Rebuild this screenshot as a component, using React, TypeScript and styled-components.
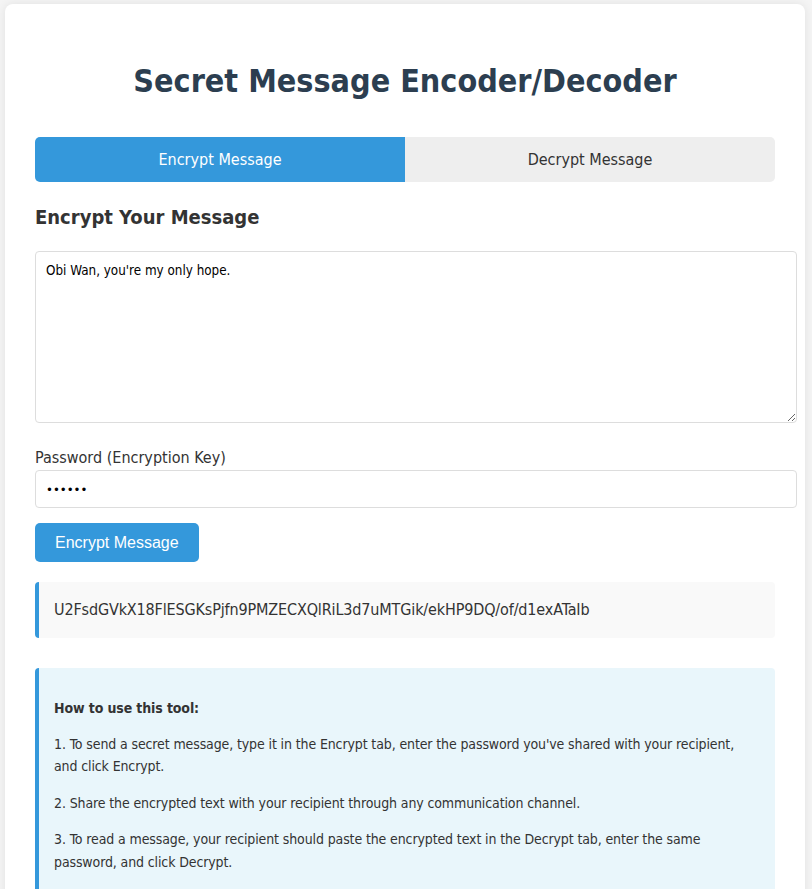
import React, { useState } from "react";
import styled, { createGlobalStyle } from "styled-components";

const FONT = `"DejaVu Sans Condensed", "DejaVu Sans", Verdana, sans-serif`;

const Global = createGlobalStyle`
  html, body { margin: 0; padding: 0; }
  body {
    background: #f4f4f4;
    font-family: ${FONT};
    color: #333;
    line-height: 1.6;
  }
`;

const Page = styled.div`
  padding: 4px 0 0 5px;
`;

const Card = styled.div`
  width: 800px;
  box-sizing: border-box;
  background: #fff;
  border-radius: 8px;
  padding: 30px;
  box-shadow: 0 0 10px rgba(0, 0, 0, 0.08);
`;

const Title = styled.h1`
  margin: 27px 0 36px;
  font-size: 32px;
  line-height: 40px;
  font-weight: bold;
  text-align: center;
  color: #2c3e50;
`;

const Tabs = styled.div`
  display: grid;
  grid-template-columns: 1fr 1fr;
  border-radius: 5px;
  overflow: hidden;
`;

const Tab = styled.button<{ $active: boolean }>`
  height: 45px;
  border: none;
  margin: 0;
  font-family: ${FONT};
  font-size: 16px;
  cursor: pointer;
  background: ${(p) => (p.$active ? "#3498db" : "#eeeeee")};
  color: ${(p) => (p.$active ? "#ffffff" : "#333333")};
`;

const SectionTitle = styled.h2`
  margin: 23px 0 22px;
  font-size: 20px;
  line-height: 24px;
  font-weight: bold;
  color: #333;
`;

const TextArea = styled.textarea`
  display: block;
  width: 100%;
  height: 150px;
  box-sizing: content-box;
  padding: 10px;
  margin: 0;
  border: 1px solid #ddd;
  border-radius: 4px;
  font-family: ${FONT};
  font-size: 13.33px;
  line-height: 1.3;
  color: #000;
  background: #fff;
`;

const Label = styled.label`
  display: block;
  margin: 25px 0 2px;
  font-size: 16px;
  line-height: 20px;
  color: #333;
`;

const Input = styled.input`
  display: block;
  width: 100%;
  height: 16px;
  box-sizing: content-box;
  padding: 10px;
  margin: 0;
  border: 1px solid #ddd;
  border-radius: 4px;
  font-family: ${FONT};
  font-size: 13px;
  color: #000;
  background: #fff;
`;

const PrimaryButton = styled.button`
  display: block;
  margin: 15px 0 0;
  padding: 10px 20px;
  border: none;
  border-radius: 5px;
  background: #3498db;
  color: #fff;
  font-family: "Liberation Sans", Arial, sans-serif;
  font-size: 16px;
  line-height: 19px;
  cursor: pointer;
`;

const Result = styled.div`
  margin-top: 20px;
  padding: 15px;
  background: #f9f9f9;
  border-left: 4px solid #3498db;
  border-radius: 4px;
  font-size: 16px;
  line-height: 25.6px;
  letter-spacing: -0.14px;
  color: #333;
  word-break: break-all;
`;

const Info = styled.div`
  margin-top: 30px;
  padding: 15px;
  background: #e9f6fb;
  border-left: 4px solid #3498db;
  border-radius: 4px;
  font-size: 14px;
  line-height: 22.4px;
  letter-spacing: -0.12px;
  color: #333;
`;

const Para = styled.p`
  margin: 14px 0;
`;

export default function App() {
  const [tab, setTab] = useState<"enc" | "dec">("enc");
  return (
    <Page>
      <Global />
      <Card>
        <Title>Secret Message Encoder/Decoder</Title>
        <Tabs>
          <Tab $active={tab === "enc"} onClick={() => setTab("enc")}>
            Encrypt Message
          </Tab>
          <Tab $active={tab === "dec"} onClick={() => setTab("dec")}>
            Decrypt Message
          </Tab>
        </Tabs>
        <SectionTitle>Encrypt Your Message</SectionTitle>
        <TextArea defaultValue="Obi Wan, you're my only hope." />
        <Label htmlFor="pw">Password (Encryption Key)</Label>
        <Input id="pw" type="password" defaultValue="secret" />
        <PrimaryButton>Encrypt Message</PrimaryButton>
        <Result>U2FsdGVkX18FlESGKsPjfn9PMZECXQlRiL3d7uMTGik/ekHP9DQ/of/d1exATaIb</Result>
        <Info>
          <Para>
            <strong>How to use this tool:</strong>
          </Para>
          <Para>
            1. To send a secret message, type it in the Encrypt tab, enter the password you've shared
            with your recipient, and click Encrypt.
          </Para>
          <Para>2. Share the encrypted text with your recipient through any communication channel.</Para>
          <Para>
            3. To read a message, your recipient should paste the encrypted text in the Decrypt tab,
            enter the same password, and click Decrypt.
          </Para>
        </Info>
      </Card>
    </Page>
  );
}
